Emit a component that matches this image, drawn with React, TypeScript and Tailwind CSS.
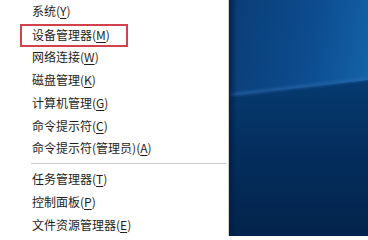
import React from "react";

const font = { fontFamily: '"Noto Sans CJK SC", "Noto Sans", sans-serif' };

type Item = { label: string; key: string };

const group1: Item[] = [
  { label: "系统", key: "Y" },
  { label: "设备管理器", key: "M" },
  { label: "网络连接", key: "W" },
  { label: "磁盘管理", key: "K" },
  { label: "计算机管理", key: "G" },
  { label: "命令提示符", key: "C" },
  { label: "命令提示符(管理员)", key: "A" },
];

const group2: Item[] = [
  { label: "任务管理器", key: "T" },
  { label: "控制面板", key: "P" },
  { label: "文件资源管理器", key: "E" },
];

function Label({ item }: { item: Item }) {
  return (
    <span className="whitespace-nowrap">
      {item.label}(<span className="underline underline-offset-2 decoration-1">{item.key}</span>)
    </span>
  );
}

function Row({ item, highlight }: { item: Item; highlight?: boolean }) {
  if (highlight) {
    return (
      <div className="h-[23px] flex items-center">
        <div className="ml-[20px] w-[108px] h-[23px] mt-[2px] border-2 border-[#d3414d] pl-[10px] flex items-center">
          <Label item={item} />
        </div>
      </div>
    );
  }
  return (
    <div className="h-[23px] flex items-center pl-[32px]">
      <Label item={item} />
    </div>
  );
}

function Wallpaper() {
  return (
    <svg className="w-full h-full block" viewBox="0 0 139 236" preserveAspectRatio="none">
      <defs>
        <linearGradient id="up" x1="0" y1="0" x2="1" y2="0.3">
          <stop offset="0" stopColor="#0a3d76" />
          <stop offset="0.6" stopColor="#0d4c8f" />
          <stop offset="1" stopColor="#1462a8" />
        </linearGradient>
        <linearGradient id="down" x1="0" y1="0" x2="0" y2="1">
          <stop offset="0" stopColor="#063a70" />
          <stop offset="0.5" stopColor="#042d5c" />
          <stop offset="1" stopColor="#03244c" />
        </linearGradient>
        <linearGradient id="edge" x1="0" y1="0" x2="1" y2="0">
          <stop offset="0" stopColor="#021d3f" stopOpacity="0.8" />
          <stop offset="1" stopColor="#021d3f" stopOpacity="0" />
        </linearGradient>
        <filter id="blur">
          <feGaussianBlur stdDeviation="1.5" />
        </filter>
      </defs>
      <rect x="0" y="0" width="139" height="236" fill="url(#up)" />
      <polygon points="0,96 139,80 139,236 0,236" fill="url(#down)" />
      <line x1="0" y1="95" x2="139" y2="79" stroke="#2d6db0" strokeWidth="2.5" opacity="0.7" filter="url(#blur)" />
      <rect x="0" y="0" width="8" height="236" fill="url(#edge)" />
    </svg>
  );
}

export default function App() {
  return (
    <div className="w-[368px] h-[236px] flex overflow-hidden bg-white" style={font}>
      <div className="w-[229px] h-full bg-white border-r border-[#cfcfcf] text-[12px] leading-none text-[#1e1e1e] flex flex-col">
        {group1.map((it, i) => (
          <Row key={it.label} item={it} highlight={i === 1} />
        ))}
        <div className="h-[8px] flex items-center pl-[31px] pr-[2px]">
          <div className="h-px w-full bg-[#cccccc]" />
        </div>
        {group2.map((it) => (
          <Row key={it.label} item={it} />
        ))}
      </div>
      <div className="flex-1 h-full">
        <Wallpaper />
      </div>
    </div>
  );
}
